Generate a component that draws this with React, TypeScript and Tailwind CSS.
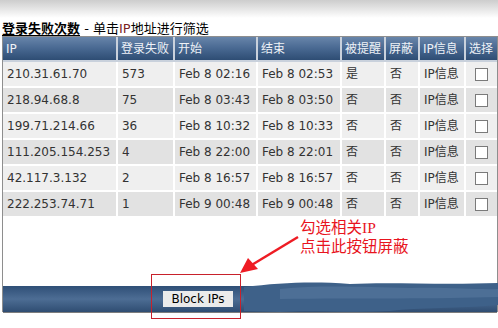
import React from 'react';

const rows = [
  { ip: '210.31.61.70', fails: 573, start: 'Feb 8 02:16', end: 'Feb 8 02:53', warned: '是' },
  { ip: '218.94.68.8', fails: 75, start: 'Feb 8 03:43', end: 'Feb 8 03:50', warned: '否' },
  { ip: '199.71.214.66', fails: 36, start: 'Feb 8 10:32', end: 'Feb 8 10:33', warned: '否' },
  { ip: '111.205.154.253', fails: 4, start: 'Feb 8 22:00', end: 'Feb 8 22:01', warned: '否' },
  { ip: '42.117.3.132', fails: 2, start: 'Feb 8 16:57', end: 'Feb 8 16:57', warned: '否' },
  { ip: '222.253.74.71', fails: 1, start: 'Feb 9 00:48', end: 'Feb 9 00:48', warned: '否' },
];

const headers = ['IP', '登录失败', '开始', '结束', '被提醒', '屏蔽', 'IP信息', '选择'];
const widths = [115, 57, 83, 84, 44, 34, 46, 31];

const cjk = "font-['DejaVu_Sans','Noto_Sans_CJK_SC',sans-serif]";
const cell = 'h-[26px] whitespace-nowrap border-b-2 border-r-2 border-white px-[4px] leading-none';

export default function App() {
  return (
    <div className={`relative h-[328px] w-[498px] overflow-hidden bg-white text-[#333] ${cjk}`}>
      <div className="h-[18px] bg-gradient-to-b from-[#cdcdcd] to-white" />

      <div className="flex h-[17px] items-end whitespace-nowrap pl-[2px] text-[13px] leading-none text-black">
        <span className="font-bold underline decoration-1 underline-offset-2">登录失败次数</span>
        <span>&nbsp;- 单击<span className="text-[#7a1f1f]">IP</span>地址进行筛选</span>
      </div>

      <div className="ml-[2px] mt-[1px] h-[276px] border-x border-t border-[#8e8e8e]">
        <table className="table-fixed border-separate border-spacing-0">
          <colgroup>
            {widths.map((w, i) => (
              <col key={i} style={{ width: w }} />
            ))}
          </colgroup>
          <thead>
            <tr>
              {headers.map((h) => (
                <th
                  key={h}
                  className="h-[25px] whitespace-nowrap border-b-2 border-r-2 border-[#c9d1dc] bg-gradient-to-b from-[#6885aa] via-[#486891] to-[#2e4d74] px-[3px] text-left text-[12px] font-normal leading-none text-[#eef2f7] last:border-r-0"
                >
                  {h}
                </th>
              ))}
            </tr>
          </thead>
          <tbody>
            {rows.map((r, i) => (
              <tr key={r.ip} className={i % 2 === 0 ? 'bg-[#efefef]' : 'bg-[#e2e2e2]'}>
                <td className={`${cell} text-[12px]`}>{r.ip}</td>
                <td className={`${cell} text-[12px]`}>{r.fails}</td>
                <td className={`${cell} text-[12px]`}>{r.start}</td>
                <td className={`${cell} text-[12px]`}>{r.end}</td>
                <td className={`${cell} text-[12px]`}>{r.warned}</td>
                <td className={`${cell} text-[12px]`}>否</td>
                <td className={`${cell} text-[12px]`}>IP信息</td>
                <td className="h-[26px] border-b-2 border-white">
                  <div className="mx-auto h-[13px] w-[13px] border border-[#7a7a7a] bg-white" />
                </td>
              </tr>
            ))}
          </tbody>
        </table>

        <div className="mt-[68px] flex h-[27px] items-center border-b border-[#7d7d7d] bg-gradient-to-b from-[#2f4f77] via-[#4d6d94] to-[#2f4d72] pl-[160px]">
          <button className="h-[16px] w-[70px] bg-[#ebebeb] text-[12px] leading-none text-black">Block IPs</button>
        </div>
      </div>

      {/* paint smear over the right part of the bar */}
      <svg className="absolute left-[240px] top-[279px]" width="258" height="36" viewBox="0 0 258 36">
        <path d="M4 8 C40 4 70 2 110 5 C150 3 200 6 258 4 L258 26 C220 30 180 28 150 32 C110 34 70 31 40 33 L4 32 Z" fill="#3e6189" />
        <path d="M40 10 C80 6 120 8 170 9 C210 8 240 11 258 10 L258 18 C200 20 120 19 40 20 Z" fill="#4d6f96" />
      </svg>

      {/* annotation */}
      <div className="absolute left-[300px] top-[218px] whitespace-nowrap text-[15.5px] leading-[19px] text-[#e8141e]">
        <div>勾选相关<span className="font-['Liberation_Serif',serif]">IP</span></div>
        <div>点击此按钮屏蔽</div>
      </div>
      <svg className="absolute left-[236px] top-[232px]" width="70" height="46" viewBox="0 0 70 46">
        <line x1="62" y1="5" x2="14" y2="34" stroke="#ee1c24" strokeWidth="2.5" />
        <polygon points="4,41 12,26 22,37" fill="#ee1c24" />
      </svg>
      <div className="absolute left-[151px] top-[274px] h-[45px] w-[90px] border-[1.5px] border-[#c8212b]" />
    </div>
  );
}
